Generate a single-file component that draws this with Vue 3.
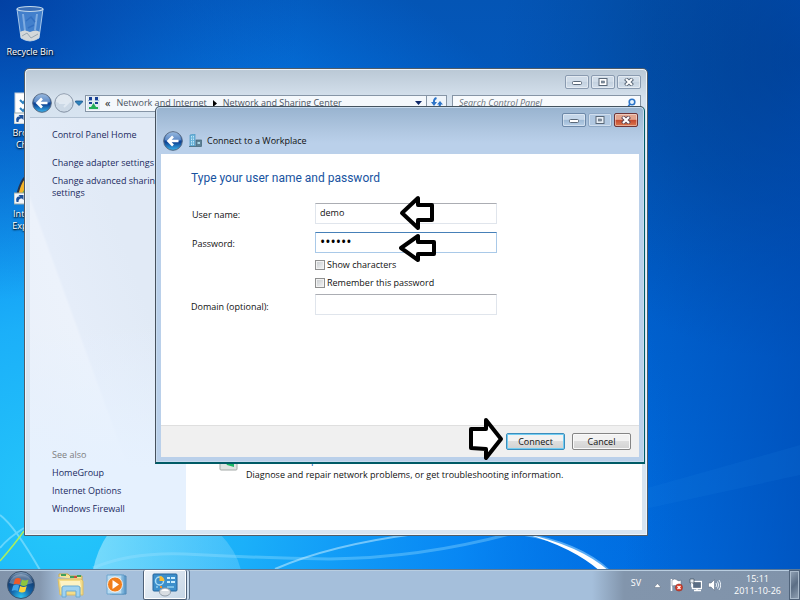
<script setup>
import { ref } from 'vue'

const user = ref('demo')
const password = ref('secret')
const domain = ref('')
const show = ref(false)
const remember = ref(false)
const seeAlso = ['HomeGroup', 'Internet Options', 'Windows Firewall']
</script>

<template>
  <div class="screen">
    <svg class="wallpaper" viewBox="0 0 800 600" preserveAspectRatio="none" aria-hidden="true">
      <defs>
        <linearGradient id="base" x1="0" y1="0" x2="0" y2="1">
          <stop offset="0" stop-color="#0455b5" />
          <stop offset=".45" stop-color="#005fcb" />
          <stop offset="1" stop-color="#006ee2" />
        </linearGradient>
        <radialGradient id="glow" gradientUnits="userSpaceOnUse" cx="60" cy="510" r="620">
          <stop offset="0" stop-color="#25c8fa" />
          <stop offset=".3" stop-color="#1cb2fa" stop-opacity=".97" />
          <stop offset=".65" stop-color="#0a90fb" stop-opacity=".75" />
          <stop offset="1" stop-color="#0074ec" stop-opacity="0" />
        </radialGradient>
        <radialGradient id="shade" gradientUnits="userSpaceOnUse" cx="800" cy="60" r="300">
          <stop offset="0" stop-color="#003878" stop-opacity=".85" />
          <stop offset=".5" stop-color="#00408c" stop-opacity=".5" />
          <stop offset="1" stop-color="#0048a0" stop-opacity="0" />
        </radialGradient>
        <radialGradient id="corner" gradientUnits="userSpaceOnUse" cx="0" cy="0" r="300">
          <stop offset="0" stop-color="#023a9c" stop-opacity=".85" />
          <stop offset="1" stop-color="#0345a8" stop-opacity="0" />
        </radialGradient>
        <linearGradient id="edge" x1="0" y1="0" x2="1" y2="0">
          <stop offset=".78" stop-color="#0048b0" stop-opacity="0" />
          <stop offset="1" stop-color="#0048b0" stop-opacity=".6" />
        </linearGradient>
        <linearGradient id="fan" x1="0" y1="0" x2="1" y2="0">
          <stop offset="0" stop-color="#c8f4ff" stop-opacity=".5" />
          <stop offset="1" stop-color="#a8e4ff" stop-opacity=".25" />
        </linearGradient>
      </defs>
      <rect width="800" height="600" fill="url(#base)" />
      <rect width="800" height="600" fill="url(#shade)" />
      <rect width="800" height="600" fill="url(#glow)" />
      <rect width="800" height="600" fill="url(#corner)" />
      <rect width="800" height="600" fill="url(#edge)" />
      <path d="M640 490 L800 445 V475 L640 510Z" fill="#2a90f0" opacity=".1" />
      <path d="M93 570 Q97 550 108 534 H220 Q236 550 241 570Z" fill="url(#fan)" />
      <path d="M93 568 Q130 552 185 554 Q260 558 330 559 Q420 558 510 534" stroke="#9fe2ff" stroke-width="3" fill="none" opacity=".35" />
      <path d="M275 569 Q330 545 415 534" stroke="#c4ecff" stroke-width="2" fill="none" opacity=".55" />
      <path d="M0 548 Q8 538 24 528 M0 515 Q14 525 40 570" stroke="#a9ecff" stroke-width="2" fill="none" opacity=".5" />
      <path d="M0 561 Q14 545 24 531" stroke="#a8ee60" stroke-width="1.5" fill="none" />
      <path d="M522 534 Q579 543 609 571" stroke="#8fd0ff" stroke-width="3" fill="none" opacity=".6" />
      <path d="M526 534 Q579 545 609 571 L600 571 Q572 547 526 534Z" fill="#fff" />
    </svg>

    <main class="desktop">
      <ul class="shortcuts">
        <li class="shortcut bin">
          <svg width="32" height="38" viewBox="0 0 32 38" aria-hidden="true">
            <path d="M3 4 L7 33 Q16 39 25 33 L29 4Z" fill="#79aee8" fill-opacity=".55" stroke="#a8c8ea" stroke-width="1" />
            <path d="M6 27 L7 33 Q16 39 25 33 L26 27 Q22 24 16 27 Q10 24 6 27Z" fill="#d4d8da" />
            <path d="M8 31 L13 28 L17 33 L24 29" stroke="#9aa7b1" fill="none" />
            <ellipse cx="16" cy="4" rx="13" ry="2.5" fill="#3b6fb8" stroke="#c3d9ec" stroke-width="1.2" />
            <path d="M9 9 L11 26 M23 9 L21 25" stroke="#d7ebff" stroke-opacity=".4" stroke-width="2" />
            <path d="M12 16 L17 12 L21 17 M20 20 L14 23" stroke="#2c68bc" stroke-width="1.5" fill="none" opacity=".7" />
          </svg>
          <span>Recycle Bin</span>
        </li>
        <li class="shortcut choice">
          <svg width="32" height="32" viewBox="0 0 32 32" aria-hidden="true">
            <rect x="1" y="1" width="30" height="30" fill="#fff" stroke="#c8d0d8" />
            <path d="M6 8 L9 11 L14 5 M6 16 L9 19 L14 13" stroke="#2a80c0" stroke-width="2" fill="none" />
            <rect x="0" y="21" width="11" height="11" fill="#f2f6fa" stroke="#9aa" />
            <path d="M2.500 30 Q1 24 6 24.500 L4.500 23 H9.500 V28 L8 26.500 Q4.500 26 4.500 30Z" fill="#1b519c" />
          </svg>
          <span>Browser<br />Choice</span>
        </li>
        <li class="shortcut explorer">
          <svg width="32" height="32" viewBox="0 0 32 32" aria-hidden="true">
            <path d="M3 23 Q7 4 16 1 L14 12 L8 25Z" fill="#f4b428" stroke="#25334c" stroke-width="2" />
            <path d="M7 22 L15 9 V26Z" fill="#5cb04c" />
            <rect x="0" y="20" width="11" height="11" fill="#f2f6fa" stroke="#9aa" />
            <path d="M2.500 29 Q1 23 6 23.500 L4.500 22 H9.500 V27 L8 25.500 Q4.500 25 4.500 29Z" fill="#1b519c" />
          </svg>
          <span>Internet<br />Explorer</span>
        </li>
      </ul>

      <section class="window panel-window" aria-label="Network and Sharing Center">
        <header class="titlebar">
          <button class="cap" aria-label="Minimize"><svg width="10" height="8" viewBox="0 0 10 8"><rect x=".5" y="3.500" width="9" height="3" rx="1" fill="#fff" stroke="#5a6878" /></svg></button>
          <button class="cap" aria-label="Maximize"><svg width="10" height="8" viewBox="0 0 10 8"><rect x="1" y=".5" width="8" height="7" fill="#fff" stroke="#5a6878" /><rect x="3.500" y="3" width="3" height="2" fill="#8796a6" stroke="#5a6878" stroke-width=".6" /></svg></button>
          <button class="cap" aria-label="Close"><svg width="10" height="8" viewBox="0 0 10 8"><path d="M1.500 .5 L8.500 7.500 M8.500 .5 L1.500 7.500" stroke="#5a6878" stroke-width="4" /><path d="M2 1 L8 7 M8 1 L2 7" stroke="#fff" stroke-width="2" /></svg></button>
        </header>
        <nav class="toolbar" aria-label="Address">
          <button class="round" aria-label="Back">
            <svg width="20" height="20" viewBox="0 0 20 20">
              <circle cx="10" cy="10" r="9.300" fill="url(#orb)" stroke="#53657e" />
              <path d="M2 9 Q10 12 18 9 A8 8 0 0 0 2 9Z" fill="#fff" opacity=".28" />
              <path d="M15.500 10 H6 M10 5.500 L5.500 10 L10 14.500" stroke="#fff" stroke-width="2.600" fill="none" />
            </svg>
          </button>
          <button class="round" aria-label="Forward">
            <svg width="20" height="20" viewBox="0 0 20 20">
              <circle cx="10" cy="10" r="9.200" fill="#ccd9e6" stroke="#8492a4" />
              <path d="M2 9 Q10 12 18 9 A8 8 0 0 0 2 9Z" fill="#fff" opacity=".4" />
              <path d="M5 10 H14 M10 6 L14 10 L10 14" stroke="#e0e9f2" stroke-width="2" fill="none" />
            </svg>
          </button>
          <svg class="drop" width="8" height="6" viewBox="0 0 8 6" aria-hidden="true"><path d="M.5 1 H7.500 V2 L4 5.500 L.5 2Z" fill="#2c83bd" stroke="#1d578e" stroke-width=".8" /></svg>
          <div class="address">
            <svg width="13" height="14" viewBox="0 0 13 14" aria-hidden="true">
              <rect width="13" height="14" fill="#dfe9f2" />
              <path d="M2 1h3v3h-3z M8 1h3v3h-3z M2 6h3v2h-3z M8 6h3v2h-3z" fill="#173f94" />
              <path d="M1 4.500h4 M8 4.500h4" stroke="#8fb0d8" />
              <path d="M6.500 7 L9 11 H11 V13 H2 V11 H4Z" fill="#21ad58" />
            </svg>
            <span class="chev">«</span>
            <a href="#">Network and Internet</a>
            <svg class="arrow" width="4" height="7" viewBox="0 0 4 7" aria-hidden="true"><path d="M0 0 L4 3.500 L0 7Z" fill="#000" /></svg>
            <a href="#">Network and Sharing Center</a>
            <svg class="end" width="7" height="5" viewBox="0 0 7 5" aria-hidden="true"><path d="M0 0 H7 L3.500 4Z" fill="#0d2768" /></svg>
          </div>
          <button class="refresh" aria-label="Refresh"><svg width="12" height="12" viewBox="0 0 12 12"><path d="M5.500 1 Q2.500 2 3 6" stroke="#2c74c8" stroke-width="2" fill="none" /><path d="M0 5 H6 L3 9Z M6 7.500 L9 4 L12 7.500Z" fill="#2c74c8" /><path d="M9 7 Q9 10 6.500 11" stroke="#2c74c8" stroke-width="2" fill="none" /></svg></button>
          <label class="search">
            <input type="search" placeholder="Search Control Panel" aria-label="Search Control Panel" />
            <svg width="9" height="11" viewBox="0 0 9 11" aria-hidden="true"><circle cx="5" cy="4" r="2.800" fill="#e6f4ff" stroke="#2c74c8" stroke-width="1.600" /><path d="M3 6 L0 10" stroke="#2c74c8" stroke-width="1.600" /></svg>
          </label>
        </nav>
        <div class="panel">
          <aside class="side">
            <a href="#">Control Panel Home</a>
            <div class="tasks">
              <a href="#">Change adapter settings</a>
              <a href="#">Change advanced sharing settings</a>
            </div>
            <div class="also">
              <span>See also</span>
              <a v-for="s in seeAlso" :key="s" href="#">{{ s }}</a>
            </div>
          </aside>
          <div class="content">
            <svg width="20" height="20" viewBox="0 0 20 20" aria-hidden="true">
              <rect x="1" y="1" width="17" height="18" rx="1" fill="#dfe4e2" stroke="#a4aaa8" />
              <path d="M4 7 L15 8 V16 L8 14Z" fill="#1bb765" />
            </svg>
            <div class="entry">
              <a href="#">Troubleshoot problems</a>
              <p>Diagnose and repair network problems, or get troubleshooting information.</p>
            </div>
          </div>
        </div>
      </section>

      <section class="window dialog" role="dialog" aria-label="Connect to a Workplace">
        <header class="titlebar">
          <button class="cap" aria-label="Minimize"><svg width="10" height="8" viewBox="0 0 10 8"><rect x=".5" y="3.500" width="9" height="3" rx="1" fill="#fff" stroke="#5a6878" /></svg></button>
          <button class="cap off" aria-label="Maximize"><svg width="10" height="8" viewBox="0 0 10 8"><rect x="1" y=".5" width="8" height="7" fill="#e8eff6" stroke="#5a6878" /><rect x="3.500" y="3" width="3" height="2" fill="#8796a6" stroke="#5a6878" stroke-width=".6" /></svg></button>
          <button class="cap close" aria-label="Close"><svg width="10" height="8" viewBox="0 0 10 8"><path d="M1.500 .5 L8.500 7.500 M8.500 .5 L1.500 7.500" stroke="#5d4450" stroke-width="4" /><path d="M2 1 L8 7 M8 1 L2 7" stroke="#fff" stroke-width="2.200" /></svg></button>
        </header>
        <div class="caption">
          <button class="round" aria-label="Back">
            <svg width="20" height="20" viewBox="0 0 20 20">
              <defs>
                <linearGradient id="orb" x1="0" y1="0" x2="0" y2="1">
                  <stop offset="0" stop-color="#6f9dd4" />
                  <stop offset=".45" stop-color="#235fb0" />
                  <stop offset=".55" stop-color="#0b3f91" />
                  <stop offset="1" stop-color="#39b4ee" />
                </linearGradient>
              </defs>
              <circle cx="10" cy="10" r="9.300" fill="url(#orb)" stroke="#53657e" />
              <path d="M2 9 Q10 12 18 9 A8 8 0 0 0 2 9Z" fill="#fff" opacity=".28" />
              <path d="M15.500 10 H6 M10 5.500 L5.500 10 L10 14.500" stroke="#fff" stroke-width="2.600" fill="none" />
            </svg>
          </button>
          <svg width="13" height="13" viewBox="0 0 13 13" aria-hidden="true">
            <path d="M1 1 L6 0 V12 H1Z" fill="#6db6dc" stroke="#4b96c2" stroke-width=".7" />
            <path d="M2.500 2 V11 M4.500 2 V11" stroke="#bfe5f5" stroke-dasharray="1.500 1" />
            <rect x="7" y="6" width="5.500" height="6.500" fill="#5d8195" stroke="#3d6175" stroke-width=".7" />
            <path d="M8.500 8h2.500v2h-2.500z" fill="#a8d6e6" />
            <path d="M0 12.500 H12" stroke="#55788c" />
          </svg>
          <span>Connect to a Workplace</span>
        </div>
        <form class="body" @submit.prevent>
          <div class="fields">
            <h1>Type your user name and password</h1>
            <div class="grid">
              <label for="user">User name:</label>
              <input id="user" v-model="user" class="text" type="text" />
              <label for="pass">Password:</label>
              <input id="pass" v-model="password" class="text active" :class="{ dots: !show }" :type="show ? 'text' : 'password'" />
              <div class="checks">
                <label><input v-model="show" type="checkbox" />Show characters</label>
                <label><input v-model="remember" type="checkbox" />Remember this password</label>
              </div>
              <label for="domain" class="outer">Domain (optional):</label>
              <input id="domain" v-model="domain" class="text" type="text" />
            </div>
          </div>
          <footer>
            <button type="submit" class="btn primary">Connect</button>
            <button type="button" class="btn">Cancel</button>
          </footer>
        </form>
        <svg class="mark mark-user" width="36" height="36" viewBox="0 0 36 36" aria-hidden="true"><path d="M3 18 L19 3 V10 H33 V25 H19 V33Z" fill="#fff" stroke="#000" stroke-width="4" stroke-linejoin="round" /></svg>
        <svg class="mark mark-pass" width="38" height="30" viewBox="0 0 38 30" aria-hidden="true"><path d="M3 15 L20 3 V9 H36 V21 H20 V27Z" fill="#fff" stroke="#000" stroke-width="4" stroke-linejoin="round" /></svg>
        <svg class="mark mark-go" width="36" height="44" viewBox="0 0 36 44" aria-hidden="true"><path d="M3 12 H18 V3 L33 22 L18 41 V32 L3 31Z" fill="#fff" stroke="#000" stroke-width="4" stroke-linejoin="round" /></svg>
      </section>
    </main>

    <footer class="taskbar">
      <button class="start" aria-label="Start">
        <svg width="30" height="30" viewBox="0 0 30 30">
          <defs>
            <radialGradient id="startball" cx=".5" cy=".95" r=".95">
              <stop offset="0" stop-color="#2cc5f2" />
              <stop offset=".4" stop-color="#1463a8" />
              <stop offset=".75" stop-color="#123c70" />
              <stop offset="1" stop-color="#8faac4" />
            </radialGradient>
          </defs>
          <circle cx="15" cy="15" r="13.500" fill="url(#startball)" stroke="#3c5470" />
          <path d="M3 13 Q15 17 27 13 A12.500 12.500 0 0 0 3 13Z" fill="#fff" opacity=".3" />
          <path d="M9 9 Q12 7 15 9 L13.500 14.500 Q11 13 7.500 14.500Z" fill="#ee5a28" />
          <path d="M16 9.500 Q19 11.500 22.500 9.500 L21 15 Q18 17 14.500 15Z" fill="#8cc63e" />
          <path d="M7.200 15.500 Q10.500 14 13.200 15.500 L11.700 21 Q9 19.500 5.700 21Z" fill="#3fa4ea" />
          <path d="M14.200 16 Q17.500 18 20.700 16 L19.200 21.500 Q16 23.500 12.700 21.500Z" fill="#fdd33c" />
        </svg>
      </button>
      <button class="task" aria-label="Windows Explorer">
        <svg width="28" height="26" viewBox="0 0 28 26">
          <path d="M2 5 V2 H11 L13 4 H25 V8" fill="#f7e49b" stroke="#c8a94c" />
          <path d="M4 3h5 M13 5h4 M20 4h4" stroke="#41a05a" stroke-width="2" />
          <path d="M17 5h3" stroke="#cf4c3c" stroke-width="2" />
          <path d="M1 7 H24 L26 9 V23 H3Z" fill="#f4dc88" stroke="#d8bc68" />
          <path d="M3 9 H23 L24 15 H4Z" fill="#fdf3c4" />
          <path d="M5 25 V16 Q5 14 7 14 H21 Q23 14 23 16 V25 H19 V19 H9 V25Z" fill="#9fd2f0" stroke="#6babd4" />
        </svg>
      </button>
      <button class="task" aria-label="Media Player">
        <svg width="24" height="22" viewBox="0 0 24 22">
          <path d="M6 2 H20 V20 H6Z" fill="#6aa5d2" stroke="#4d86b4" />
          <path d="M4 1 H18 V20 H4Z" fill="#8fc4e8" stroke="#5b96c4" />
          <path d="M1 1 H16 V20 H1Z" fill="#b8dcf2" stroke="#6ea6cf" />
          <circle cx="9" cy="10.500" r="7.500" fill="#f07e1c" stroke="#fff" stroke-width=".8" />
          <path d="M6.500 6 L13 10.500 L6.500 15Z" fill="#fff" />
        </svg>
      </button>
      <button class="task open" aria-label="Control Panel">
        <svg width="26" height="24" viewBox="0 0 26 24">
          <rect x="1" y="1" width="24" height="17" rx="1" fill="#3c8fcb" stroke="#25659c" />
          <circle cx="7.500" cy="8" r="4" fill="none" stroke="#a8dcf6" stroke-width="1.500" />
          <path d="M7.500 8 V3 A5 5 0 0 1 12.500 8Z" fill="#f6ba30" />
          <path d="M15 5h3 M19 5h4 M15 9h3 M19 9h4" stroke="#c9ecfc" stroke-width="2" />
          <path d="M4 14h2 M15 14h7" stroke="#8fd0f0" stroke-width="1.500" />
          <path d="M8 14h2" stroke="#f0902c" stroke-width="2" />
          <ellipse cx="13" cy="19" rx="5.500" ry="4" fill="#d8dde2" stroke="#939da8" />
          <path d="M9 18 Q13 14 17 18" fill="#fff" />
        </svg>
      </button>
      <div class="tray">
        <span class="lang">SV</span>
        <svg width="7" height="5" viewBox="0 0 7 5" aria-hidden="true"><path d="M0 4.500 L3.500 .5 L7 4.500Z" fill="#fff" stroke="#445468" stroke-width=".4" /></svg>
        <div class="status">
          <svg width="13" height="14" viewBox="0 0 13 14" aria-hidden="true">
            <path d="M1.500 1 V13" stroke="#fff" stroke-width="1.600" />
            <path d="M2 2 Q5 0 7 2 T11 2 V8 Q9 9 7 8 T2 8Z" fill="#fff" stroke="#56657a" stroke-width=".5" />
            <circle cx="9" cy="9.500" r="3.600" fill="#d73c28" stroke="#8d2a20" stroke-width=".5" />
            <path d="M7.500 8 L10.500 11 M10.500 8 L7.500 11" stroke="#fff" stroke-width="1.200" />
          </svg>
          <svg width="13" height="14" viewBox="0 0 13 14" aria-hidden="true">
            <rect x="3.500" y="3.500" width="9" height="7" fill="#5a6d84" stroke="#fff" stroke-width="1.300" />
            <path d="M5 12.500 H12 M8 10 V12" stroke="#fff" stroke-width="1.500" />
            <path d="M1 1h4v4h-4z" fill="#e6ebf0" stroke="#3d4d60" stroke-width=".7" />
            <path d="M2.500 5 V9 H4" stroke="#e6ebf0" fill="none" />
          </svg>
          <svg width="13" height="14" viewBox="0 0 13 14" aria-hidden="true">
            <path d="M.5 5 H3 L6.500 1.500 V12.500 L3 9 H.5Z" fill="#fff" stroke="#56657a" stroke-width=".5" />
            <path d="M8 5 Q9.500 7 8 9 M9.500 3.500 Q12 7 9.500 10.500 M11 2 Q14.500 7 11 12" stroke="#e9f0f7" fill="none" />
          </svg>
        </div>
        <time class="clock" datetime="2011-10-26T15:11"><span>15:11</span><span>2011-10-26</span></time>
        <button class="peek" aria-label="Show desktop"></button>
      </div>
    </footer>
  </div>
</template>

<style>
body {
  margin: 0;
}
</style>

<style scoped>
* {
  box-sizing: border-box;
}
.screen {
  position: relative;
  display: flex;
  flex-direction: column;
  height: 100vh;
  overflow: hidden;
  font-family: 'Open Sans', 'Noto Sans', sans-serif;
  font-size: 9px;
  line-height: 12px;
  color: #111;
}
button,
input {
  font: inherit;
  color: inherit;
  margin: 0;
}
button {
  padding: 0;
  border: 0;
  background: none;
}
a {
  color: #1b2a5e;
  text-decoration: none;
}
svg {
  display: block;
  flex: none;
}
.wallpaper {
  position: absolute;
  inset: 0;
  width: 100%;
  height: 100%;
}
.desktop {
  position: relative;
  flex: 1;
}
.shortcuts {
  margin: 0;
  padding: 0;
  list-style: none;
}
.shortcut {
  position: absolute;
  display: flex;
  flex-direction: column;
  align-items: center;
  width: 60px;
  text-align: center;
  color: #fff;
  text-shadow: 0 1px 2px #000, 1px 1px 1px #0008;
}
.bin {
  left: 0;
  top: 5px;
  gap: 3px;
}
.choice {
  left: 0;
  top: 92px;
  gap: 3px;
}
.explorer {
  left: 0;
  top: 173px;
  gap: 3px;
}
.window {
  position: absolute;
  display: flex;
  flex-direction: column;
  border: 1px solid #4f5c69;
  border-radius: 5px 5px 0 0;
}
.panel-window {
  inset: 68px 152px 33px 24px;
  padding: 0 5px 5px;
  background: linear-gradient(#bac8d5, #d6e2ee 30px, #d8e5f2 60px);
  box-shadow: inset 0 0 0 1px #eef4fa;
}
.titlebar {
  display: flex;
  justify-content: flex-end;
  gap: 2px;
}
.panel-window .titlebar {
  padding: 6px 1px 0 0;
}
.cap {
  display: grid;
  place-items: center;
  width: 24px;
  height: 14px;
  border: 1px solid #8a9bb0;
  border-radius: 2px;
  background: linear-gradient(#d0dce8 45%, #c3d1df 50%, #d3dfeb);
  box-shadow: inset 0 0 0 1px #ffffff66;
}
.toolbar {
  display: flex;
  align-items: center;
  height: 28px;
  padding: 0 1px;
}
.round {
  margin: 0 1px;
}
.drop {
  margin: 0 2px 0 0;
}
.address {
  display: flex;
  align-items: center;
  flex: 1;
  height: 17px;
  padding: 0 4px 0 1px;
  border: 1px solid #8695a6;
  background: #f4f8fc;
  white-space: nowrap;
}
.address a {
  color: #4c5563;
}
.chev {
  margin: 0 6px 0 5px;
  font-size: 11px;
  color: #222;
}
.arrow {
  margin: 0 6px;
}
.end {
  margin-left: auto;
}
.refresh {
  display: grid;
  place-items: center;
  width: 20px;
  height: 17px;
  margin-right: 5px;
  border: 1px solid #8695a6;
  border-left: 0;
  background: #eef4fa;
}
.search {
  display: flex;
  align-items: center;
  width: 189px;
  height: 17px;
  padding: 0 4px 0 6px;
  border: 1px solid #8695a6;
  background: #f7fafd;
}
.search input {
  flex: 1;
  min-width: 0;
  padding: 0;
  border: 0;
  outline: 0;
  background: none;
  font-style: italic;
}
.search input::placeholder {
  color: #6b727b;
  opacity: 1;
}
.panel {
  display: flex;
  flex: 1;
  min-height: 0;
  border-top: 1px solid #b4c3d3;
  background: #fff;
}
.side {
  display: flex;
  flex-direction: column;
  width: 156px;
  padding: 11px 22px 15px;
  background: linear-gradient(#e9f0fa00 50%, #e6f1fe 85%), linear-gradient(250deg, #e1eaf6 35%, #e5edf9 60%, #ecf2fb 61%, #e8eff9);
}
.tasks {
  display: flex;
  flex-direction: column;
  gap: 6px;
  margin: 16px 0 0;
}
.also {
  display: flex;
  flex-direction: column;
  gap: 6px;
  margin-top: auto;
}
.also span {
  color: #7d7d80;
}
.content {
  display: flex;
  align-items: flex-end;
  flex: 1;
  gap: 7px;
  padding: 0 0 49px 33px;
}
.content svg {
  margin-bottom: 10px;
}
.entry {
  display: flex;
  flex-direction: column;
  gap: 4px;
  white-space: nowrap;
}
.entry a {
  font-size: 10px;
  color: #1a5fb4;
}
.entry p {
  margin: 0;
}
.dialog {
  inset: 106px 155px 105px 155px;
  padding: 0 5px 5px;
  border-color: #44535f #005b66 #005b66 #46515d;
  border-bottom-width: 2px;
  background: linear-gradient(#98b3cf, #b0c7e1 24px, #bad0ea 36px);
  box-shadow: inset 0 0 0 1px #c9dcef;
}
.dialog .titlebar {
  padding: 6px 1px 0 0;
}
.dialog .cap {
  border-color: #6c88a8;
  background: linear-gradient(#c4d6e9 45%, #9db9d5 50%, #b9d0e8);
}
.dialog .off {
  border-color: #8fa9c6;
  background: #b1c8e1;
}
.dialog .close {
  border-color: #6d3538;
  background: linear-gradient(#e3a58e 45%, #c5472c 50%, #d9784e);
}
.caption {
  display: flex;
  align-items: center;
  gap: 5px;
  height: 27px;
  padding: 0 1px;
}
.body {
  display: flex;
  flex-direction: column;
  flex: 1;
  background: #fff;
}
.fields {
  flex: 1;
  padding: 15px 30px;
}
h1 {
  margin: 0 0 16px;
  font-family: Roboto, 'Open Sans', sans-serif;
  font-size: 12px;
  line-height: 18px;
  font-weight: 400;
  color: #17539f;
}
.grid {
  display: grid;
  grid-template-columns: 124px 182px;
  align-items: center;
  row-gap: 8px;
}
.grid > label {
  padding: 2px 0 0 1px;
}
.grid > .outer {
  padding: 4px 0 0;
}
.text {
  width: 100%;
  height: 21px;
  padding: 0 4px 2px;
  border: 1px solid #e0e5ec;
  border-top-color: #abadb3;
  border-radius: 0;
  outline: 0;
  background: #fff;
}
.active {
  border-color: #a9c9e8;
  border-top-color: #4680b8;
}
.dots {
  font-size: 14px;
  color: #000;
}
.checks {
  grid-column: 2;
  display: flex;
  flex-direction: column;
  gap: 6px;
  margin: -2px 0 -3px;
}
.checks label {
  display: flex;
  align-items: center;
  gap: 2px;
}
.checks input {
  appearance: none;
  width: 10px;
  height: 10px;
  border: 1px solid #8e8f8f;
  background: linear-gradient(135deg, #c6cacd, #f4f5f6);
  box-shadow: inset 0 0 0 1px #f2f2f2;
}
.body footer {
  display: flex;
  justify-content: flex-end;
  align-items: center;
  gap: 7px;
  height: 32px;
  padding-right: 8px;
  border-top: 1px solid #dfdfdf;
  background: #f0f0f0;
}
.btn {
  width: 59px;
  height: 17px;
  border: 1px solid #858585;
  border-radius: 2px;
  background: linear-gradient(#f2f2f2 45%, #dedede 50%, #d2d2d2);
  box-shadow: inset 0 0 0 1px #fafafa;
}
.primary {
  border-color: #3c8dbc;
  box-shadow: inset 0 0 0 1px #72cdf2;
}
.mark {
  position: absolute;
}
.mark-user {
  left: 243px;
  top: 88px;
}
.mark-pass {
  left: 242px;
  top: 126px;
}
.mark-go {
  left: 312px;
  top: 310px;
}
.taskbar {
  position: relative;
  display: flex;
  align-items: center;
  height: 31px;
  padding-left: 6px;
  border-top: 1px solid #5a7896;
  background: linear-gradient(90deg, #8193aa, #8598b0 40px, #a5bfdb 62px, #a5bfdb 74%, #8295ac 78%, #8093aa);
  box-shadow: inset 0 1px 0 #b9cde0;
}
.start {
  width: 30px;
  margin-right: 13px;
}
.task {
  display: grid;
  place-items: center;
  width: 44px;
  height: 30px;
  margin-right: 3px;
}
.open {
  border: 1px solid #4e6178;
  border-top: 0;
  border-radius: 2px;
  background: linear-gradient(135deg, #eef3f8, #c5d5e5);
  box-shadow: inset 0 0 0 1px #fff, 2px 0 0 #c9dbed, 3px 0 0 #5e738b;
}
.tray {
  display: flex;
  align-items: center;
  height: 100%;
  margin-left: auto;
  color: #fff;
}
.lang {
  margin: 0 13px 4px 0;
}
.status {
  display: flex;
  gap: 6px;
  margin: 0 13px 0 9px;
}
.clock {
  display: flex;
  flex-direction: column;
  align-items: center;
}
.peek {
  width: 11px;
  height: 30px;
  margin-left: 8px;
  border: 1px solid #50637a;
  background: linear-gradient(135deg, #92a3b6, #5b6e85 50%, #92a3b6);
  box-shadow: inset 0 0 0 1px #a9bacb;
}
</style>
